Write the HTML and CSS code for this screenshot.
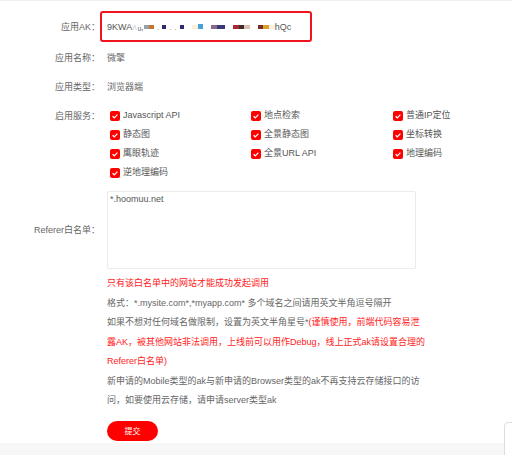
FILE: index.html
```html
<!DOCTYPE html>
<html lang="zh-CN">
<head>
    <meta charset="UTF-8">
    <meta name="viewport" content="width=device-width, initial-scale=1.0">
    <title>应用设置</title>
    <link rel="stylesheet" href="styles.css">
</head>
<body>
    <div class="page">
        <form class="form">
            <div class="row row-ak">
                <label class="label">应用AK：</label>
                <div class="ak-box">
                    <span class="ak-text">9KWA</span><span class="smudge">ʌ</span><span class="ak-text">ᵤ,</span><span class="m m-gray"></span><span class="m m-orange"></span><span class="dots">.</span><span class="m m-navy"></span><span class="dots">. .</span><span class="m m-navy"></span><span class="gap"></span><span class="m m-cream"></span><span class="m m-blue"></span><span class="gap"></span><span class="m m-mauve"></span><span class="m m-navy2"></span><span class="gap"></span><span class="m m-red"></span><span class="m m-dark"></span><span class="m m-tan"></span><span class="gap"></span><span class="m m-red2"></span><span class="m m-gold"></span><span class="m m-cream"></span><span class="ak-text">hQc</span>
                </div>
            </div>

            <div class="row">
                <label class="label">应用名称：</label>
                <div class="value">微擎</div>
            </div>

            <div class="row">
                <label class="label">应用类型：</label>
                <div class="value">浏览器端</div>
            </div>

            <div class="row">
                <label class="label">启用服务：</label>
                <div class="services">
                    <span class="check">Javascript API</span>
                    <span class="check">地点检索</span>
                    <span class="check">普通IP定位</span>
                    <span class="check">静态图</span>
                    <span class="check">全景静态图</span>
                    <span class="check">坐标转换</span>
                    <span class="check">鹰眼轨迹</span>
                    <span class="check">全景URL API</span>
                    <span class="check">地理编码</span>
                    <span class="check">逆地理编码</span>
                </div>
            </div>

            <div class="row row-referer">
                <label class="label">Referer白名单：</label>
                <textarea class="referer">*.hoomuu.net</textarea>
            </div>

            <div class="notes">
                <p class="red">只有该白名单中的网站才能成功发起调用</p>
                <p>格式：*.mysite.com*,*myapp.com* 多个域名之间请用英文半角逗号隔开</p>
                <p>如果不想对任何域名做限制，设置为英文半角星号*<span class="red">(谨慎使用，前端代码容易泄<br>露AK，被其他网站非法调用，上线前可以用作Debug，线上正式ak请设置合理的<br>Referer白名单)</span></p>
                <p>新申请的Mobile类型的ak与新申请的Browser类型的ak不再支持云存储接口的访<br>问，如要使用云存储，请申请server类型ak</p>
            </div>

            <button type="button" class="submit">提交</button>
        </form>
        <div class="footer"></div>
        <div class="side-widget"></div>
    </div>
</body>
</html>
```

FILE: styles.css
```css
body {
    margin: 0;
    padding: 0;
    font-family: 'Liberation Sans', 'Noto Sans CJK SC', sans-serif;
    font-size: 9px;
    color: #666;
    background: white;
}
.page {
    position: relative;
    height: 455px;
    overflow: hidden;
    border-top: 1px solid #f0f0f0;
    box-sizing: border-box;
}
.form {
    padding-top: 10px;
}
.row {
    display: flex;
    align-items: flex-start;
    margin-bottom: 9px;
}
.label {
    width: 100px;
    flex-shrink: 0;
    text-align: right;
    line-height: 20px;
    color: #666;
}
.value {
    margin-left: 7px;
    line-height: 20px;
}
/* AK box */
.row-ak {
    margin-bottom: 6px;
    align-items: center;
}
.ak-box {
    width: 212px;
    height: 31px;
    border: 2px solid #f0141e;
    border-radius: 3px;
    box-sizing: border-box;
    padding-left: 5px;
    display: flex;
    align-items: center;
    white-space: nowrap;
}
.ak-text {
    color: #555;
}
.smudge {
    color: #c8d4dc;
    margin-right: 1px;
}
.dots {
    color: #aaa;
    margin: 0 3px;
}
.gap {
    display: inline-block;
    width: 8px;
}
.m {
    display: inline-block;
    width: 5px;
    height: 4px;
}
.m-gray { background: #93a3ad; }
.m-orange { background: #c8742e; }
.m-navy { background: #2e2a70; width: 4px; }
.m-cream { background: #fbf0da; width: 6px; }
.m-blue { background: #4aa0d8; height: 5px; }
.m-mauve { background: #8a6a8c; width: 6px; }
.m-navy2 { background: #3a3a7a; width: 8px; }
.m-red { background: #a82a2e; width: 6px; }
.m-dark { background: #3c2c2c; width: 5px; }
.m-tan { background: #dcc0b0; width: 6px; }
.m-red2 { background: #7c2a2a; width: 5px; }
.m-gold { background: #d8a030; width: 6px; }
/* services */
.services {
    margin-left: 10px;
    display: grid;
    grid-template-columns: 141px 142px 100px;
    line-height: 19px;
}
.check {
    display: flex;
    align-items: center;
    gap: 3px;
    color: #555;
}
.check::before {
    content: "";
    width: 10px;
    height: 10px;
    border-radius: 2px;
    background: #f00 url("data:image/svg+xml,%3Csvg xmlns='http://www.w3.org/2000/svg' viewBox='0 0 10 10'%3E%3Cpath d='M2.6 5.2 L4.3 6.8 L7.4 3.6' fill='none' stroke='white' stroke-width='1.2'/%3E%3C/svg%3E") center/10px 10px no-repeat;
}
/* referer */
.row-referer {
    align-items: center;
    margin-top: 6px;
    margin-bottom: 5px;
}
.referer {
    margin-left: 7px;
    width: 309px;
    height: 78px;
    box-sizing: border-box;
    border: 1px solid #e8ebef;
    border-radius: 2px;
    padding: 2px 2px;
    font-family: inherit;
    font-size: 9px;
    color: #555;
    resize: none;
    outline: none;
}
/* notes */
.notes {
    margin-left: 107px;
    line-height: 19.5px;
    white-space: nowrap;
}
.notes p {
    margin: 0;
}
.red {
    color: #ff1a1a;
}
.submit {
    margin: 10px 0 0 107px;
    width: 51px;
    height: 20px;
    border: none;
    border-radius: 10px;
    background: #ff0000;
    color: white;
    font-family: inherit;
    font-size: 8px;
    padding: 0;
    cursor: pointer;
}
.footer {
    position: absolute;
    left: 0;
    right: 0;
    top: 442px;
    bottom: 0;
    background: #f7f7f7;
}
.side-widget {
    position: absolute;
    left: 504px;
    top: 421px;
    width: 40px;
    height: 60px;
    border: 1px solid #ddd;
    border-radius: 4px;
    background: white;
}
```
